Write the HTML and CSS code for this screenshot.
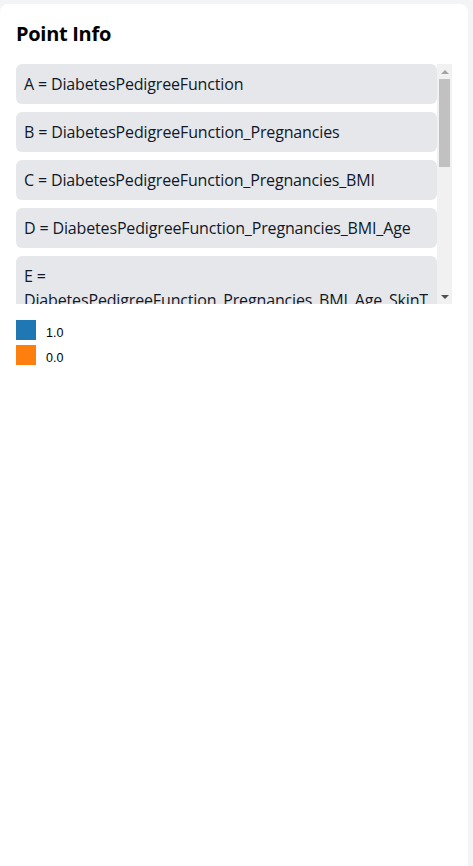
FILE: index.html
```html
<!DOCTYPE html>
<html lang="en">
<head>
<meta charset="utf-8">
<title>Point Info</title>
<link rel="stylesheet" href="styles.css">
</head>
<body>
<div class="card">
  <h2 class="title">Point Info</h2>
  <div class="list-wrap">
    <div class="list">
      <div class="item">A = DiabetesPedigreeFunction</div>
      <div class="item">B = DiabetesPedigreeFunction_Pregnancies</div>
      <div class="item">C = DiabetesPedigreeFunction_Pregnancies_BMI</div>
      <div class="item">D = DiabetesPedigreeFunction_Pregnancies_BMI_Age</div>
      <div class="item">E = DiabetesPedigreeFunction_Pregnancies_BMI_Age_SkinThickness</div>
      <div class="item">F = DiabetesPedigreeFunction_Pregnancies_BMI_Age_SkinThickness_Insulin</div>
      <div class="item">G = DiabetesPedigreeFunction_Pregnancies_BMI_Age_SkinThickness_Insulin_Glucose</div>
      <div class="item">H = DiabetesPedigreeFunction_Pregnancies_BMI_Age_SkinThickness_Insulin_Glucose_BloodPressure</div>
    </div>
    <div class="scrollbar" aria-hidden="true">
      <div class="sb-btn sb-up"><span class="tri-up"></span></div>
      <div class="sb-track"><div class="sb-thumb"></div></div>
      <div class="sb-btn sb-down"><span class="tri-down"></span></div>
    </div>
  </div>
  <div class="legend">
    <div class="legend-row">
      <span class="swatch swatch-blue"></span>
      <span class="legend-text">1.0</span>
    </div>
    <div class="legend-row">
      <span class="swatch swatch-orange"></span>
      <span class="legend-text">0.0</span>
    </div>
  </div>
</div>
</body>
</html>
```
FILE: styles.css
```css
html, body {
  background: #f3f4f6;
}
body {
  margin: 4px 5px 0 0;
  font-family: "Open Sans", "Noto Sans", sans-serif;
  color: #111827;
}
.card {
  background: #ffffff;
  border-radius: 8px 8px 0 0;
  padding: 16px;
  min-height: calc(100vh - 4px);
  box-sizing: border-box;
}
.title {
  margin: 0 0 16px 0;
  font-size: 20px;
  line-height: 28px;
  font-weight: 700;
  letter-spacing: -0.3px;
  color: #000;
}
.list-wrap {
  display: flex;
  height: 240px;
}
.list {
  flex: 1;
  min-width: 0;
  overflow: hidden;
  display: flex;
  flex-direction: column;
  gap: 8px;
}
.scrollbar {
  flex: none;
  width: 15px;
  background: #f1f1f1;
  display: flex;
  flex-direction: column;
}
.sb-btn {
  flex: none;
  height: 15px;
  display: flex;
  align-items: center;
  justify-content: center;
}
.tri-up {
  width: 0;
  height: 0;
  border-left: 4px solid transparent;
  border-right: 4px solid transparent;
  border-bottom: 4px solid #a3a3a3;
}
.tri-down {
  width: 0;
  height: 0;
  border-left: 4px solid transparent;
  border-right: 4px solid transparent;
  border-top: 4px solid #505050;
}
.sb-track {
  flex: 1;
  padding: 0 2px;
}
.sb-thumb {
  height: 88px;
  background: #c1c1c1;
}
.item {
  flex: none;
  background: #e5e7eb;
  border-radius: 6px;
  padding: 8px;
  font-size: 16px;
  line-height: 24px;
  letter-spacing: -0.15px;
  overflow-wrap: anywhere;
}
.legend {
  margin-top: 16px;
  display: flex;
  flex-direction: column;
  gap: 5px;
}
.legend-row {
  display: flex;
  align-items: flex-start;
  height: 20px;
}
.swatch {
  flex: none;
  width: 20px;
  height: 20px;
}
.swatch-blue {
  background: #1f77b4;
}
.swatch-orange {
  background: #ff7f0e;
}
.legend-text {
  margin-left: 10px;
  padding-top: 7px;
  font-family: "Liberation Sans", Arial, sans-serif;
  font-size: 12.5px;
  line-height: 13px;
  color: #000;
}
```
